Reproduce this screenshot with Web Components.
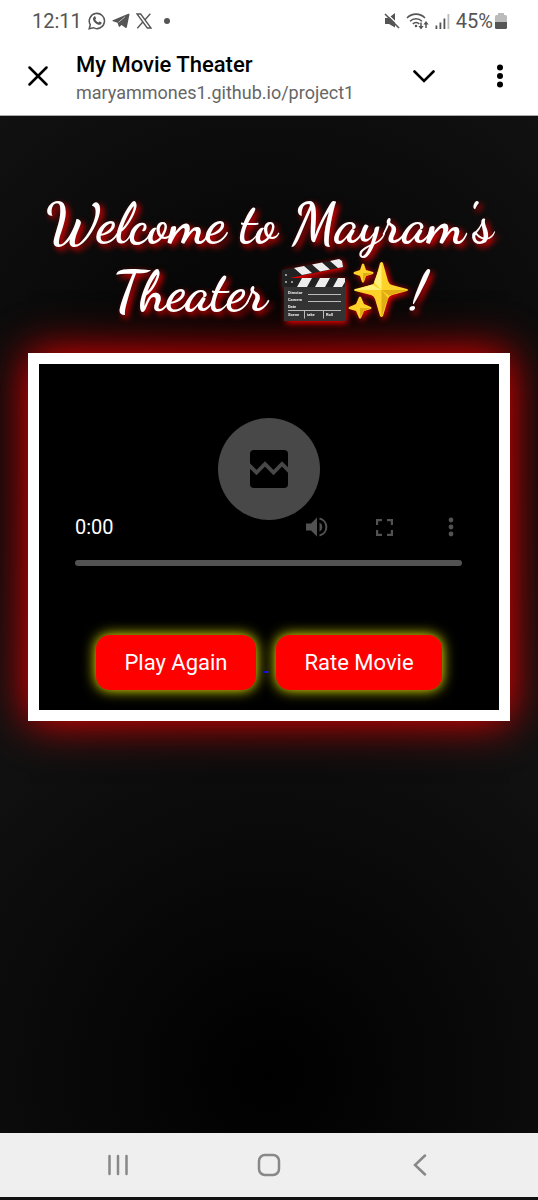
<!DOCTYPE html>
<html lang="en">
<head>
<meta charset="utf-8">
<meta name="viewport" content="width=device-width, initial-scale=1">
<title>My Movie Theater</title>
<style>
  body {
    margin: 0;
    background: #000;
    font-family: Roboto, sans-serif;
  }
</style>
</head>
<body>
<theater-app></theater-app>

<script>
class BaseElement extends HTMLElement {
  constructor() {
    super();
    const template = document.createElement("template");
    template.innerHTML = this.constructor.markup;
    this.attachShadow({ mode: "open" });
    this.shadowRoot.appendChild(template.content.cloneNode(true));
  }
}

class StatusBar extends BaseElement {
  static get markup() {
    return `
      <style>
        :host {
          display: flex;
          align-items: center;
          justify-content: space-between;
          height: 42px;
          padding: 0 31px 0 32px;
          background: #fff;
          color: #555;
          font-size: 20px;
          line-height: 24px;
        }
        div {
          display: flex;
          align-items: center;
          gap: 6px;
        }
        .start svg:last-child { margin-left: 5px; }
        .level { display: flex; align-items: center; gap: 2px; }
        svg { display: block; }
      </style>
      <div class="start">
        <span>12:11</span>
        <svg width="18" height="18" viewBox="0 0 18 18" fill="none" stroke="#555" stroke-width="1.5">
          <path d="M1.2 16.8 2.3 12.8A7.6 7.6 0 1 1 5.3 15.7Z"/>
          <path fill="#555" stroke="none" d="M6.2 4.6c.5-.4 1-.3 1.2.2l.6 1.5c.1.3 0 .6-.7 1.3.7 1.4 1.7 2.3 3.1 2.9.7-.9.9-1.1 1.2-1l1.7.8c.4.2.4.6.2 1.2-.5 1.1-1.9 1.5-3 1.2-2.6-.7-4.7-2.7-5.4-5-.3-1.1.1-2.3 1.1-3.1Z"/>
        </svg>
        <svg width="18" height="18" viewBox="0 0 18 18" fill="#555">
          <path d="M.8 8.3 16.3 1.8c.8-.3 1.3.1 1.1 1l-2.5 12.3c-.2.9-.8 1.1-1.5.6l-3.8-2.8-2 1.9c-.3.3-.7.2-.8-.3L5.5 10.7.9 9.3C.2 9 .2 8.5.8 8.3Z"/>
          <path d="m6.5 10.3 6.5-5.5" stroke="#fff" stroke-width=".6"/>
        </svg>
        <svg width="16" height="16" viewBox="0 0 16 16" fill="none" stroke="#555" stroke-width="1.3">
          <path d="M1 1h3.7L15 15h-3.7ZM14.3.7 8.8 7M6.8 9 1.3 15.3"/>
        </svg>
        <svg width="8" height="8" viewBox="0 0 8 8" fill="#555"><circle cx="4" cy="4" r="3"/></svg>
      </div>
      <div>
        <svg width="16" height="16" viewBox="0 0 16 16">
          <path fill="#555" d="M1 5h3.5L11 0v14.5L5 11H1Z"/>
          <path d="M2 0 16 13.5" stroke="#fff" stroke-width="1.4"/>
          <path d="M1 1 15 15" stroke="#555" stroke-width="1.6"/>
        </svg>
        <svg width="23" height="18" viewBox="0 0 23 18" fill="none" stroke="#555" stroke-width="1.6">
          <path d="M1 6a12.5 12.5 0 0 1 18 0M4 9.2a8.5 8.5 0 0 1 12 0M6.8 12a4.6 4.6 0 0 1 6.5 0"/>
          <circle cx="10" cy="14" r="1.3" fill="#555" stroke="none"/>
          <path d="M15 10.5v5M20 16v-5" stroke-width="1.5"/>
          <path d="m12.4 14 2.6 3.5 2.6-3.5ZM17.4 12.5 20 9l2.6 3.5Z" fill="#555" stroke="none"/>
        </svg>
        <svg width="15" height="16" viewBox="0 0 15 16" fill="#555">
          <path d="M.5 12.5h1.8V16H.5ZM4.5 9.5h1.8V16H4.5ZM8.5 5.5h1.8V16H8.5Z"/>
          <path fill="#bbb" d="M12.5 1h1.8v15h-1.8Z"/>
        </svg>
        <span class="level">
          <span>45%</span>
          <svg width="12" height="16" viewBox="0 0 12 16">
            <path fill="#bbb" d="M3 0h6v2h1.5Q12 2 12 3.5V9H0V3.5Q0 2 1.5 2H3Z"/>
            <path fill="#555" d="M0 9h12v5.5Q12 16 10.5 16h-9Q0 16 0 14.5Z"/>
          </svg>
        </span>
      </div>
    `;
  }
}

class BrowserBar extends BaseElement {
  static get markup() {
    return `
      <style>
        :host {
          display: flex;
          align-items: flex-start;
          padding: 9px 22px 8px;
          background: #fff;
          color: #000;
          border-bottom: 1px solid #aaa;
        }
        button {
          flex: none;
          display: grid;
          place-items: center;
          width: 32px;
          height: 32px;
          margin-top: 9px;
          padding: 0;
          border: 0;
          background: none;
        }
        .page {
          flex: 1;
          margin: 0 22px;
        }
        .title {
          font-size: 22px;
          line-height: 28px;
          font-weight: 500;
        }
        .address {
          font-size: 18px;
          line-height: 28px;
          color: #666;
        }
        .more { margin-left: 44px; }
      </style>
      <button aria-label="Close">
        <svg width="20" height="20" viewBox="0 0 20 20" fill="none" stroke="#000" stroke-width="2.5" stroke-linecap="round">
          <path d="m1.5 1.5 17 17m0-17-17 17"/>
        </svg>
      </button>
      <div class="page">
        <div class="title"><slot name="title"></slot></div>
        <div class="address"><slot name="address"></slot></div>
      </div>
      <button aria-label="Minimize">
        <svg width="22" height="14" viewBox="0 0 22 14" fill="none" stroke="#000" stroke-width="2.6" stroke-linecap="round">
          <path d="M1.5 2.5 11 12l9.5-9.5"/>
        </svg>
      </button>
      <button class="more" aria-label="More options">
        <svg width="8" height="24" viewBox="0 0 8 24">
          <circle cx="4" cy="3.5" r="3"/><circle cx="4" cy="12" r="3"/><circle cx="4" cy="20.5" r="3"/>
        </svg>
      </button>
    `;
  }
}

class ClapperIcon extends BaseElement {
  static get markup() {
    return `
      <style>
        :host { display: inline-block; vertical-align: -14px; }
        svg { display: block; filter: drop-shadow(2px 2px 3px #f00); overflow: visible; }
        text { font: 700 4px Roboto, sans-serif; fill: #eee; text-shadow: none; }
      </style>
      <svg width="66" height="66" viewBox="0 0 66 66" role="img" aria-label="Clapper board">
        <path fill="#222" d="M1 12 60 1l2 8L4 21Z"/>
        <path fill="#eee" d="m13 10 10-2 8 7-10 2ZM31 6.5l10-2 8 7-10 2ZM49 3l9-2 3 2 1 6-5 1Z"/>
        <path fill="#222" d="M1 12h5l4 8h54v9H1Z"/>
        <path fill="#eee" d="M21 20h10l-5 9H16ZM39 20h10l-5 9H34ZM57 20h7v4l-3 5h-9Z"/>
        <path fill="#333" d="M3 29h61v34H3Z"/>
        <path fill="none" stroke="#bbb" stroke-width="1" d="M27 36.5h33M27 43.5h33M7 52.5h53M23.5 52.5v8M42.5 52.5v8"/>
        <g fill="#bbb"><circle cx="5" cy="17" r="1"/><circle cx="5" cy="24" r="1"/><circle cx="11" cy="24" r="1"/></g>
        <text x="7" y="36">Director</text>
        <text x="7" y="43">Camera</text>
        <text x="7" y="50">Date</text>
        <text x="7" y="58">Scene</text>
        <text x="26" y="58">take</text>
        <text x="45" y="58">Roll</text>
      </svg>
    `;
  }
}

class SparklesIcon extends BaseElement {
  static get markup() {
    return `
      <style>
        :host { display: inline-block; vertical-align: -9px; }
        svg { display: block; filter: drop-shadow(2px 2px 3px #f00); overflow: visible; }
      </style>
      <svg width="62" height="58" viewBox="0 0 62 58" role="img" aria-label="Sparkles">
        <path fill="#fdd32a" d="M33 2q1.5-2 3 0l5 18q1 3 4 4l15 4q2 1 0 2l-15 4q-3 1-4 4l-5 17q-1.5 2-3 0l-5-17q-1-3-4-4L8 30q-2-1 0-2l16-4q3-1 4-4Z"/>
        <path fill="#fff176" d="M34.5 1.5V29L27 21ZM7 29h27.5l-9.5-5.5Z"/>
        <path fill="#e0ad12" d="M34.5 29H61l-19 5.5ZM34.5 29v27L41 37Z"/>
        <path fill="#fdd32a" d="M15 3q1-1 2 0l2 6 7 2q1 1 0 2l-7 2-2 6q-1 1-2 0l-2-6-6-2q-1-1 0-2l6-2Z"/>
        <path fill="#e0ad12" d="M16 12h10l-7 3-3 6Z"/>
        <path fill="#fdd32a" d="M12 36q1-1 2 0l3 7 7 3q1 1 0 2l-7 2-3 7q-1 1-2 0l-3-7-7-2q-1-1 0-2l7-3Z"/>
        <path fill="#e0ad12" d="M13 47h11l-7 3-4 7Z"/>
      </svg>
    `;
  }
}

class WelcomeHeading extends BaseElement {
  static get markup() {
    return `
      <style>
        :host { display: block; }
        h1 {
          margin: 0;
          font-family: "Dancing Script", cursive;
          font-size: 56px;
          line-height: 68px;
          font-weight: 700;
          text-align: center;
          color: #fff;
          text-shadow: 3px 3px 6px #f00;
        }
      </style>
      <h1><slot></slot></h1>
    `;
  }
}

class MoviePlayer extends BaseElement {
  static get markup() {
    return `
      <style>
        :host {
          display: block;
          padding: 54px 0 0;
          color: #fff;
        }
        .broken {
          display: grid;
          place-items: center;
          width: 102px;
          height: 102px;
          margin: 0 auto;
          padding: 0;
          border: 0;
          border-radius: 50%;
          background: #484848;
        }
        .controls {
          display: flex;
          align-items: center;
          height: 32px;
          margin: -9px 28px 0 36px;
        }
        .time {
          flex: 1;
          font-size: 20px;
          line-height: 24px;
        }
        .controls button {
          display: grid;
          place-items: center;
          width: 40px;
          height: 32px;
          margin-left: 27px;
          padding: 0;
          border: 0;
          background: none;
        }
        input {
          display: block;
          appearance: none;
          box-sizing: border-box;
          width: calc(100% - 73px);
          height: 6px;
          margin: 17px 37px 0 36px;
          border-radius: 3px;
          background: #525252;
        }
        input::-webkit-slider-thumb {
          appearance: none;
          width: 0;
          height: 0;
        }
      </style>
      <button class="broken" aria-label="Video unavailable" disabled>
        <svg width="38" height="38" viewBox="0 0 38 38">
          <rect width="38" height="38" rx="4"/>
          <path d="m-2 14 8.5 8.5 8.5-8.5 8.5 8.5L32 14l8 8" fill="none" stroke="#484848" stroke-width="3.8"/>
        </svg>
      </button>
      <div class="controls">
        <span class="time">0:00</span>
        <button aria-label="Mute" disabled>
          <svg width="22" height="20" viewBox="0 0 22 20" fill="#525252">
            <path d="M0 6.5h5L11 .5v19L5 13.5H0Z"/>
            <path d="M13.5 5.5a5 5 0 0 1 0 9Z"/>
            <path d="M13.5 1.5a8.7 8.7 0 0 1 0 17" fill="none" stroke="#525252" stroke-width="2"/>
          </svg>
        </button>
        <button aria-label="Full screen" disabled>
          <svg width="17" height="17" viewBox="0 0 17 17" fill="none" stroke="#525252" stroke-width="2.2">
            <path d="M1.1 6V1.1H6M11 1.1h4.9V6M15.9 11v4.9H11M6 15.9H1.1V11"/>
          </svg>
        </button>
        <button aria-label="More" disabled>
          <svg width="6" height="20" viewBox="0 0 6 20" fill="#525252">
            <circle cx="3" cy="3" r="2.4"/><circle cx="3" cy="10" r="2.4"/><circle cx="3" cy="17" r="2.4"/>
          </svg>
        </button>
      </div>
      <input type="range" aria-label="Seek" value="0" disabled>
    `;
  }
}

class GlowButton extends BaseElement {
  static get markup() {
    return `
      <style>
        :host { display: block; }
        button {
          display: block;
          padding: 14px 28px;
          border: 0;
          border-radius: 14px;
          background: #f00;
          color: #fff;
          font: 22px/27px Roboto, sans-serif;
          box-shadow: 0 0 14px #ff0;
        }
      </style>
      <button><slot></slot></button>
    `;
  }
}

class MovieScreen extends BaseElement {
  static get markup() {
    return `
      <style>
        :host {
          display: block;
          border: 11px solid #fff;
          background: #000;
          box-shadow: 0 0 42px #f00;
        }
        .actions {
          display: flex;
          justify-content: center;
          align-items: center;
          gap: 8px;
          padding: 69px 0 20px;
        }
        a {
          color: #00e;
          font-size: 20px;
          line-height: 24px;
        }
      </style>
      <movie-player></movie-player>
      <div class="actions">
        <glow-button>Play Again</glow-button>
        <a href="#rate" aria-label="Rate">&nbsp;</a>
        <glow-button>Rate Movie</glow-button>
      </div>
    `;
  }
}

class NavBar extends BaseElement {
  static get markup() {
    return `
      <style>
        :host {
          display: flex;
          justify-content: space-between;
          align-items: center;
          height: 64px;
          padding: 0 98px;
          background: #efefef;
          border-bottom: 3px solid #111;
        }
        button {
          display: grid;
          place-items: center;
          width: 40px;
          height: 40px;
          padding: 0;
          border: 0;
          background: none;
        }
        svg { fill: none; stroke: #888; stroke-width: 2.5; stroke-linecap: round; }
      </style>
      <button aria-label="Recent apps">
        <svg width="20" height="22" viewBox="0 0 20 22"><path d="M1.5 2v18M10 2v18M18.5 2v18"/></svg>
      </button>
      <button aria-label="Home">
        <svg width="24" height="24" viewBox="0 0 24 24"><rect x="2" y="2" width="20" height="20" rx="6"/></svg>
      </button>
      <button aria-label="Back">
        <svg width="14" height="22" viewBox="0 0 14 22"><path d="m12 1.5-10 9.500 10 9.500"/></svg>
      </button>
    `;
  }
}

class TheaterApp extends BaseElement {
  static get markup() {
    return `
      <style>
        :host {
          display: flex;
          flex-direction: column;
          min-height: 100vh;
        }
        /* the backdrop glow repeats down the page */
        main {
          flex: 1;
          padding: 74px 28px 0;
          background: radial-gradient(circle, #000, #111) 0 0 / 100% 640px;
        }
        movie-screen { margin-top: 27px; }
      </style>
      <status-bar></status-bar>
      <browser-bar>
        <span slot="title">My Movie Theater</span>
        <span slot="address">maryammones1.github.io/project1</span>
      </browser-bar>
      <main>
        <welcome-heading>
          <span>Welcome to Mayram's</span>
          <span>Theater</span>
          <clapper-icon></clapper-icon><sparkles-icon></sparkles-icon><span>!</span>
        </welcome-heading>
        <movie-screen></movie-screen>
      </main>
      <nav-bar></nav-bar>
    `;
  }
}

window.customElements.define("status-bar", StatusBar);
window.customElements.define("browser-bar", BrowserBar);
window.customElements.define("clapper-icon", ClapperIcon);
window.customElements.define("sparkles-icon", SparklesIcon);
window.customElements.define("welcome-heading", WelcomeHeading);
window.customElements.define("movie-player", MoviePlayer);
window.customElements.define("glow-button", GlowButton);
window.customElements.define("movie-screen", MovieScreen);
window.customElements.define("nav-bar", NavBar);
window.customElements.define("theater-app", TheaterApp);
</script>
</body>
</html>
